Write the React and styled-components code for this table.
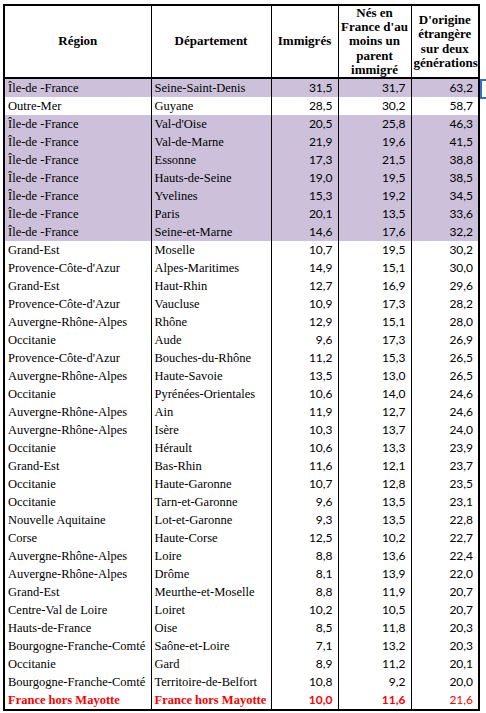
import React from 'react'
import styled, { createGlobalStyle } from 'styled-components'

const Global = createGlobalStyle`
  body {
    margin: 0;
    background: #fff;
  }
`

const Page = styled.div`
  padding: 4px 0 0 3px;
`

const Table = styled.table`
  border-collapse: collapse;
  table-layout: fixed;
  width: 475px;
  border: 2px solid #000;
  font-family: "Liberation Serif", serif;
  font-size: 12.5px;
  color: #000;
`

const Head = styled.th`
  border: 1px solid #000;
  border-bottom-width: 2px;
  height: 71px;
  padding: 0 2px;
  font-weight: bold;
  font-size: 13px;
  line-height: 14.2px;
  text-align: center;
  vertical-align: middle;
`

const Row = styled.tr`
  background: ${p => (p.$hl ? '#ccc0da' : '#fff')};
  color: ${p => (p.$total ? '#ff0000' : '#000')};
  font-weight: ${p => (p.$total ? 'bold' : 'normal')};
`

const Cell = styled.td`
  position: relative;
  height: 18px;
  padding: 0 0 0 3px;
  border-left: 1px solid #000;
  border-right: 1px solid #000;
  white-space: nowrap;
  overflow: visible;
  line-height: 18px;
`

const Num = styled(Cell)`
  font-family: Lato, "Liberation Sans", sans-serif;
  font-size: 12px;
  text-align: right;
  padding: 0 5px 0 0;
  font-weight: ${p => (p.$light ? 'normal' : 'inherit')};
`

const Selection = styled.span`
  position: absolute;
  left: calc(100% + 2px);
  top: 0;
  width: 8px;
  height: 16px;
  border: 2px solid #2f6fd1;
  border-right: none;
`

const rows = [
  ['Île-de -France', 'Seine-Saint-Denis', '31,5', '31,7', '63,2', true],
  ['Outre-Mer', 'Guyane', '28,5', '30,2', '58,7', false],
  ['Île-de -France', "Val-d'Oise", '20,5', '25,8', '46,3', true],
  ['Île-de -France', 'Val-de-Marne', '21,9', '19,6', '41,5', true],
  ['Île-de -France', 'Essonne', '17,3', '21,5', '38,8', true],
  ['Île-de -France', 'Hauts-de-Seine', '19,0', '19,5', '38,5', true],
  ['Île-de -France', 'Yvelines', '15,3', '19,2', '34,5', true],
  ['Île-de -France', 'Paris', '20,1', '13,5', '33,6', true],
  ['Île-de -France', 'Seine-et-Marne', '14,6', '17,6', '32,2', true],
  ['Grand-Est', 'Moselle', '10,7', '19,5', '30,2'],
  ["Provence-Côte-d'Azur", 'Alpes-Maritimes', '14,9', '15,1', '30,0'],
  ['Grand-Est', 'Haut-Rhin', '12,7', '16,9', '29,6'],
  ["Provence-Côte-d'Azur", 'Vaucluse', '10,9', '17,3', '28,2'],
  ['Auvergne-Rhône-Alpes', 'Rhône', '12,9', '15,1', '28,0'],
  ['Occitanie', 'Aude', '9,6', '17,3', '26,9'],
  ["Provence-Côte-d'Azur", 'Bouches-du-Rhône', '11,2', '15,3', '26,5'],
  ['Auvergne-Rhône-Alpes', 'Haute-Savoie', '13,5', '13,0', '26,5'],
  ['Occitanie', 'Pyrénées-Orientales', '10,6', '14,0', '24,6'],
  ['Auvergne-Rhône-Alpes', 'Ain', '11,9', '12,7', '24,6'],
  ['Auvergne-Rhône-Alpes', 'Isère', '10,3', '13,7', '24,0'],
  ['Occitanie', 'Hérault', '10,6', '13,3', '23,9'],
  ['Grand-Est', 'Bas-Rhin', '11,6', '12,1', '23,7'],
  ['Occitanie', 'Haute-Garonne', '10,7', '12,8', '23,5'],
  ['Occitanie', 'Tarn-et-Garonne', '9,6', '13,5', '23,1'],
  ['Nouvelle Aquitaine', 'Lot-et-Garonne', '9,3', '13,5', '22,8'],
  ['Corse', 'Haute-Corse', '12,5', '10,2', '22,7'],
  ['Auvergne-Rhône-Alpes', 'Loire', '8,8', '13,6', '22,4'],
  ['Auvergne-Rhône-Alpes', 'Drôme', '8,1', '13,9', '22,0'],
  ['Grand-Est', 'Meurthe-et-Moselle', '8,8', '11,9', '20,7'],
  ['Centre-Val de Loire', 'Loiret', '10,2', '10,5', '20,7'],
  ['Hauts-de-France', 'Oise', '8,5', '11,8', '20,3'],
  ['Bourgogne-Franche-Comté', 'Saône-et-Loire', '7,1', '13,2', '20,3'],
  ['Occitanie', 'Gard', '8,9', '11,2', '20,1'],
  ['Bourgogne-Franche-Comté', 'Territoire-de-Belfort', '10,8', '9,2', '20,0'],
]

export default function App() {
  return (
    <Page>
      <Global />
      <Table>
        <colgroup>
          <col style={{ width: 147 }} />
          <col style={{ width: 120 }} />
          <col style={{ width: 67 }} />
          <col style={{ width: 73 }} />
          <col style={{ width: 68 }} />
        </colgroup>
        <thead>
          <tr>
            <Head>Région</Head>
            <Head>Département</Head>
            <Head>Immigrés</Head>
            <Head>Nés en<br />France d'au<br />moins un<br />parent<br />immigré</Head>
            <Head>D'origine<br />étrangère<br />sur deux<br />générations</Head>
          </tr>
        </thead>
        <tbody>
          {rows.map(([reg, dep, a, b, c, hl], i) => (
            <Row key={dep} $hl={hl}>
              <Cell>{reg}</Cell>
              <Cell>{dep}</Cell>
              <Num>{a}</Num>
              <Num>{b}</Num>
              <Num>
                {c}
                {i === 0 && <Selection />}
              </Num>
            </Row>
          ))}
          <Row $total>
            <Cell>France hors Mayotte</Cell>
            <Cell>France hors Mayotte</Cell>
            <Num>10,0</Num>
            <Num>11,6</Num>
            <Num $light>21,6</Num>
          </Row>
        </tbody>
      </Table>
    </Page>
  )
}
